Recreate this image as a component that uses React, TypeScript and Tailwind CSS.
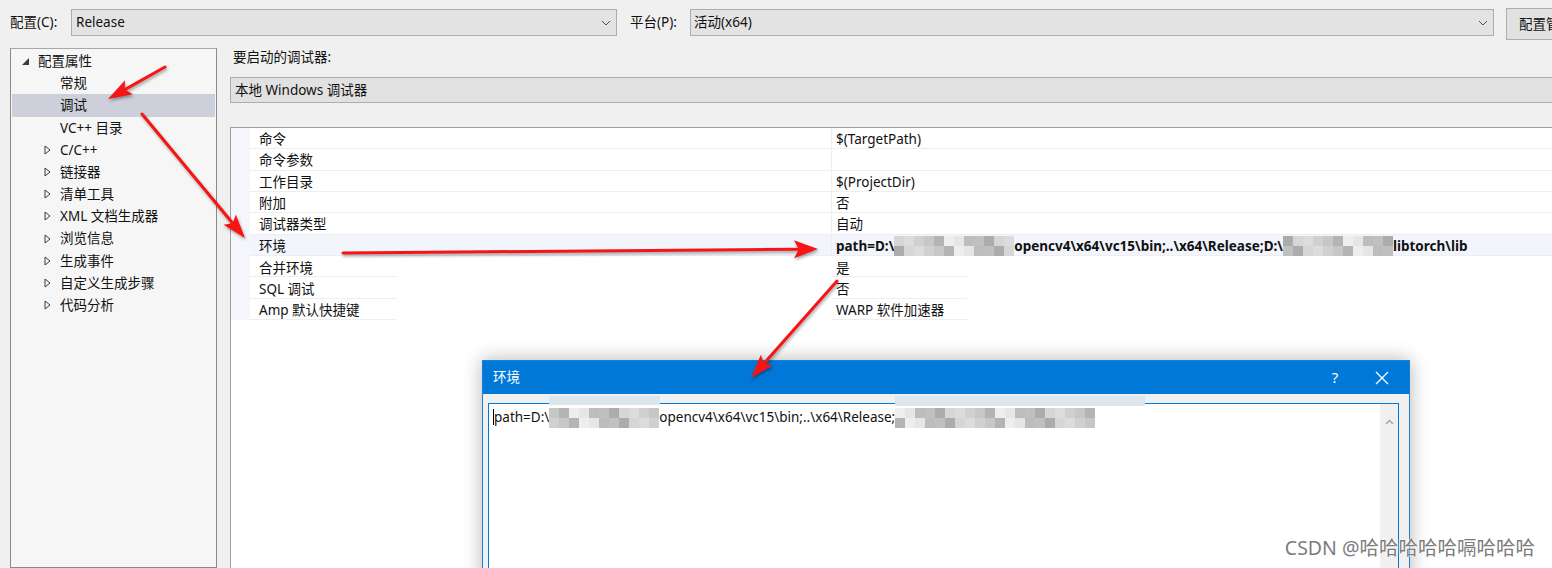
import React from "react";

const grays = [
  "bg-[#bdbdbd]",
  "bg-[#d6d6d6]",
  "bg-[#c7c7c7]",
  "bg-[#e6e6e6]",
  "bg-[#acacac]",
  "bg-[#d0d0d0]",
  "bg-[#eeeeee]",
  "bg-[#c0c0c0]",
  "bg-[#dcdcdc]",
  "bg-[#b4b4b4]",
];

type Item = { label: string; level: number; kind: "open" | "closed" | "leaf"; selected?: boolean };

const tree: Item[] = [
  { label: "配置属性", level: 0, kind: "open" },
  { label: "常规", level: 1, kind: "leaf" },
  { label: "调试", level: 1, kind: "leaf", selected: true },
  { label: "VC++ 目录", level: 1, kind: "leaf" },
  { label: "C/C++", level: 1, kind: "closed" },
  { label: "链接器", level: 1, kind: "closed" },
  { label: "清单工具", level: 1, kind: "closed" },
  { label: "XML 文档生成器", level: 1, kind: "closed" },
  { label: "浏览信息", level: 1, kind: "closed" },
  { label: "生成事件", level: 1, kind: "closed" },
  { label: "自定义生成步骤", level: 1, kind: "closed" },
  { label: "代码分析", level: 1, kind: "closed" },
];

const props: [string, string][] = [
  ["命令", "$(TargetPath)"],
  ["命令参数", ""],
  ["工作目录", "$(ProjectDir)"],
  ["附加", "否"],
  ["调试器类型", "自动"],
  ["环境", "__env"],
  ["合并环境", "是"],
  ["SQL 调试", "否"],
  ["Amp 默认快捷键", "WARP 软件加速器"],
];

function Chevron() {
  return (
    <svg width="10" height="6" viewBox="0 0 10 6" className="shrink-0">
      <path d="M1 1 L5 5 L9 1" fill="none" stroke="#505050" strokeWidth="1" />
    </svg>
  );
}

function Mosaic({ blocks, seed }: { blocks: number; seed: number }) {
  return (
    <span className="inline-flex flex-col align-middle">
      {[0, 1].map((r) => (
        <span key={r} className="flex">
          {Array.from({ length: blocks }).map((_, i) => (
            <span key={i} className={"block w-[10px] h-[10px] " + grays[(i * 7 + r * 3 + seed) % grays.length]} />
          ))}
        </span>
      ))}
    </span>
  );
}

function Arrow({ x1, y1, x2, y2, len = 22, half = 8 }: { x1: number; y1: number; x2: number; y2: number; len?: number; half?: number }) {
  const dx = x2 - x1;
  const dy = y2 - y1;
  const d = Math.hypot(dx, dy);
  const ux = dx / d;
  const uy = dy / d;
  const px = -uy;
  const py = ux;
  const bx = x2 - ux * len;
  const by = y2 - uy * len;
  const nx = x2 - ux * len * 0.8;
  const ny = y2 - uy * len * 0.8;
  const pts = [
    [x2, y2],
    [bx + px * half, by + py * half],
    [nx, ny],
    [bx - px * half, by - py * half],
  ]
    .map((p) => p.join(","))
    .join(" ");
  return (
    <g>
      <line x1={x1} y1={y1} x2={nx} y2={ny} stroke="#f81414" strokeWidth="3" strokeLinecap="round" />
      <polygon points={pts} fill="#f81414" />
    </g>
  );
}

export default function App() {
  return (
    <div className="relative w-[1552px] h-[568px] overflow-hidden bg-[#f0f0f0] text-[13.5px] text-[#111] font-['Noto_Sans','Noto_Sans_CJK_SC',sans-serif]">
      {/* top bar */}
      <div className="flex items-start h-[48px] pt-[9px] pl-[10px]">
        <div className="w-[61px] shrink-0 h-[27px] flex items-center">配置(C):</div>
        <div className="w-[546px] shrink-0 h-[27px] flex items-center justify-between bg-[#e3e3e3] border border-[#adadad] pl-[4px] pr-[5px]">
          <span>Release</span>
          <Chevron />
        </div>
        <div className="w-[60px] shrink-0 h-[27px] flex items-center ml-[13px]">平台(P):</div>
        <div className="w-[804px] shrink-0 h-[27px] flex items-center justify-between bg-[#e3e3e3] border border-[#adadad] pl-[3px] pr-[5px]">
          <span>活动(x64)</span>
          <Chevron />
        </div>
        <div className="ml-[12px] -mt-px w-[100px] h-[32px] shrink-0 flex items-center pl-[12px] bg-[#e1e1e1] border border-[#adadad] whitespace-nowrap">
          配置管理器
        </div>
      </div>

      {/* body */}
      <div className="flex pl-[10px]">
        <div className="w-[207px] h-[520px] shrink-0 bg-[#f6f6f6] border border-[#8a8a8a] border-t-[#a8a8a8] pt-[1px]">
          {tree.map((it) => (
            <div
              key={it.label}
              className={"flex items-center h-[22.2px] mx-px " + (it.selected ? "bg-[#cdd0db]" : "")}
            >
              {it.level === 0 ? (
                <span className="w-[26px] pl-[10px] flex">
                  <svg width="7" height="7" viewBox="0 0 7 7">
                    <polygon points="7,0 7,7 0,7" fill="#3c3c3c" />
                  </svg>
                </span>
              ) : (
                <span className="w-[48px] pl-[32px] flex">
                  {it.kind === "closed" && (
                    <svg width="7" height="10" viewBox="0 0 7 10">
                      <polygon points="1,1 6,5 1,9" fill="none" stroke="#3c3c3c" strokeWidth="1" />
                    </svg>
                  )}
                </span>
              )}
              <span className="whitespace-nowrap">{it.label}</span>
            </div>
          ))}
        </div>

        <div className="ml-[13px] w-[1340px] shrink-0 flex flex-col">
          <div className="h-[18px] leading-[18px] pl-[3px]">要启动的调试器:</div>
          <div className="mt-[11px] h-[26px] flex items-center pl-[4px] pt-px bg-[#e1e1e1] border border-[#adadad]">
            本地 Windows 调试器
          </div>
          <div className="mt-[24px] h-[460px] bg-white border-t border-l border-[#a0a0a0]">
            {props.map(([name, value], idx) => {
              const env = value === "__env";
              const partial = idx >= 6;
              return (
                <div key={name} className={"flex h-[21.33px] " + (env ? "bg-[#f2f5fc]" : "")}>
                  <div className="w-[19px] shrink-0 bg-[#f4f6fb]" />
                  <div
                    className={
                      "relative w-[582px] shrink-0 pl-[9px] pt-[2px] flex items-center " +
                      (partial ? "" : "border-b border-r border-[#eeeeee]")
                    }
                  >
                    {name}
                    {partial && <div className="absolute left-0 bottom-0 w-[147px] h-px bg-[#eeeeee]" />}
                  </div>
                  <div
                    className={
                      "relative flex-1 pl-[4px] pt-[2px] flex items-center whitespace-nowrap " +
                      (partial ? "" : "border-b border-[#eeeeee]")
                    }
                  >
                    {env ? (
                      <span className="font-bold flex items-center">
                        path=D:\
                        <Mosaic blocks={12} seed={1} />
                        opencv4\x64\vc15\bin;..\x64\Release;D:\
                        <Mosaic blocks={11} seed={4} />
                        libtorch\lib
                      </span>
                    ) : (
                      value
                    )}
                    {partial && <div className="absolute left-0 bottom-0 w-[135px] h-px bg-[#eeeeee]" />}
                  </div>
                </div>
              );
            })}
          </div>
        </div>
      </div>

      {/* dialog */}
      <div className="absolute left-[482px] top-[360px] w-[928px] h-[230px] bg-[#f0f0f0] border border-[#1a7fd6] shadow-[0_0_18px_rgba(0,0,0,0.3)]">
        <div className="h-[33px] bg-[#0078d7] flex items-center pl-[10px] text-white">
          <span className="flex-1">环境</span>
          <span className="w-[20px] text-center text-[15px] mr-[30px]">?</span>
          <svg width="14" height="14" viewBox="0 0 14 14" className="mr-[20px]">
            <path d="M1 1 L13 13 M13 1 L1 13" stroke="#fff" strokeWidth="1.3" />
          </svg>
        </div>
        <div className="pl-[5px] pr-[10px] pt-[9px]">
          <div className="h-[200px] bg-white border border-[#0078d7] flex">
            <div className="flex-1 pl-[5px] pt-[4px]">
              <div className="relative flex items-center h-[18px] whitespace-nowrap">
                <span className="absolute -left-[1px] top-[1px] w-px h-[16px] bg-black" />
                path=D:\
                <span className="relative">
                  <span className="absolute left-0 -top-[10px] w-[111px] h-[9px] bg-[#dae6ec]" />
                  <Mosaic blocks={11} seed={2} />
                </span>
                opencv4\x64\vc15\bin;..\x64\Release;
                <span className="relative">
                  <span className="absolute left-0 -top-[10px] w-[250px] h-[10px] bg-[#dbe7ed]" />
                  <Mosaic blocks={20} seed={6} />
                </span>
              </div>
            </div>
            <div className="w-[18px] bg-[#f0f0f0] flex justify-center pt-[15px]">
              <svg width="9" height="6" viewBox="0 0 9 6">
                <path d="M1 5 L4.5 1.5 L8 5" fill="none" stroke="#a6a6a6" strokeWidth="1.5" />
              </svg>
            </div>
          </div>
        </div>
      </div>

      {/* watermark */}
      <div className="absolute right-[17px] bottom-[6px] text-[19.5px] text-[#7c7c7c] [text-shadow:0_0_2px_#fff,0_0_2px_#fff]">
        CSDN @哈哈哈哈哈嗝哈哈哈
      </div>

      {/* annotation arrows */}
      <svg className="absolute inset-0 pointer-events-none drop-shadow-[1px_2px_1.5px_rgba(0,0,0,0.35)]" width="1552" height="568">
        <Arrow x1={165} y1={67} x2={108} y2={99} len={24} half={8} />
        <Arrow x1={142} y1={114} x2={245} y2={238} len={24} half={8} />
        <Arrow x1={343} y1={253} x2={818} y2={249} len={24} half={9} />
        <Arrow x1={837} y1={281} x2={751} y2={378} len={24} half={8} />
      </svg>
    </div>
  );
}
